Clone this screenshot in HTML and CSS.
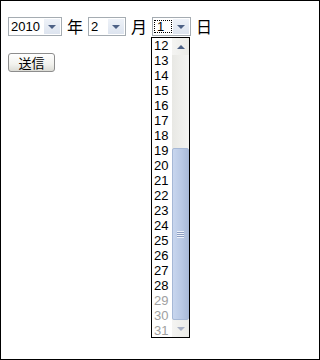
FILE: index.html
```html
<!DOCTYPE html>
<html lang="ja">
<head>
<meta charset="utf-8">
<link rel="stylesheet" href="styles.css">
</head>
<body>
<div class="frame">
  <form class="form">
    <div class="row">
      <span class="sel sel-year"><span class="val">2010</span><span class="drop"><i class="tri"></i></span></span>
      <span class="lbl">年</span>
      <span class="sel sel-month"><span class="val">2</span><span class="drop"><i class="tri"></i></span></span>
      <span class="lbl">月</span>
      <span class="sel sel-day"><span class="val focus">1</span><span class="drop"><i class="tri"></i></span></span>
      <span class="lbl">日</span>
    </div>
    <div class="row2">
      <button type="button" class="submit">送信</button>
    </div>
  </form>
  <div class="list">
    <ul class="opts">
      <li>12</li><li>13</li><li>14</li><li>15</li><li>16</li>
      <li>17</li><li>18</li><li>19</li><li>20</li><li>21</li>
      <li>22</li><li>23</li><li>24</li><li>25</li><li>26</li>
      <li>27</li><li>28</li><li class="dis">29</li><li class="dis">30</li><li class="dis">31</li>
    </ul>
    <div class="sb">
      <div class="sb-btn"><i class="up"></i></div>
      <div class="sb-track">
        <div class="sb-gap"></div>
        <div class="sb-thumb"><span class="grip"></span></div>
      </div>
      <div class="sb-btn"><i class="dn"></i></div>
    </div>
  </div>
</div>
</body>
</html>
```

FILE: styles.css
```css
html, body {
  margin: 0;
  padding: 0;
  background: #fff;
}
.frame {
  position: relative;
  width: 320px;
  height: 360px;
  box-sizing: border-box;
  border: 1px solid #000;
  font-family: "Liberation Sans", "Noto Sans CJK JP", sans-serif;
  font-size: 13px;
  color: #000;
}
.form {
  padding: 16px 0 0 7px;
}
.row {
  display: flex;
  align-items: center;
  height: 19px;
}
.sel {
  display: flex;
  align-items: stretch;
  height: 19px;
  box-sizing: border-box;
  border: 1px solid #a5acb2;
  background: #fff;
}
.sel-year { width: 54px; }
.sel-month { width: 38px; }
.sel-day { width: 39px; }
.val {
  flex: 1;
  padding-left: 2px;
  line-height: 17px;
}
.val.focus {
  flex: 0 0 auto;
  box-sizing: border-box;
  width: 18px;
  margin: 2px 0 2px 1px;
  padding-left: 2px;
  line-height: 11px;
  border: 1px dotted #000;
}
.sel-day .val.focus + .drop { margin-left: auto; }
.drop {
  width: 16px;
  display: flex;
  align-items: center;
  justify-content: center;
  background: linear-gradient(#eef2f8, #dde4ef);
  margin: 1px;
}
.tri {
  width: 0;
  height: 0;
  border-left: 4px solid transparent;
  border-right: 4px solid transparent;
  border-top: 4px solid #4d6185;
}
.lbl {
  font-family: "Noto Sans CJK JP", sans-serif;
  font-size: 16px;
  margin: 0 5px 0 5px;
  line-height: 19px;
}
.row2 {
  margin-top: 17px;
}
.submit {
  width: 47px;
  height: 19px;
  padding: 0;
  border: 1px solid #8d8d8d;
  border-radius: 3px;
  background: linear-gradient(#ffffff, #f2f2ee 60%, #dcdcd6);
  font-family: "Noto Sans CJK JP", sans-serif;
  font-size: 13px;
  line-height: 17px;
  color: #000;
}
.list {
  position: absolute;
  left: 150px;
  top: 36px;
  width: 39px;
  height: 301px;
  box-sizing: border-box;
  border: 1px solid #000;
  background: #fff;
  display: flex;
}
.opts {
  list-style: none;
  margin: 0;
  padding: 0;
  flex: 1;
}
.opts li {
  height: 15px;
  line-height: 15px;
  padding-left: 2px;
  font-size: 13px;
}
.opts li.dis { color: #a0a0a0; }
.sb {
  width: 17px;
  display: flex;
  flex-direction: column;
  background: #f3f3f1;
}
.sb-btn {
  height: 17px;
  display: flex;
  align-items: center;
  justify-content: center;
  background: linear-gradient(90deg, #f4f4f2, #ebebe7);
}
.up, .dn {
  width: 0;
  height: 0;
  border-left: 4px solid transparent;
  border-right: 4px solid transparent;
}
.up { border-bottom: 4px solid #4d6185; }
.dn { border-top: 4px solid #a8b0c4; }
.sb-track {
  flex: 1;
  display: flex;
  flex-direction: column;
  background: linear-gradient(90deg, #e8e8e4, #f4f4f2);
}
.sb-gap { height: 93px; }
.sb-thumb {
  flex: 1;
  box-sizing: border-box;
  border: 1px solid #a6b8d6;
  border-radius: 2px;
  background: linear-gradient(90deg, #c8d6ee, #b8c8e4 60%, #aabbd9);
  display: flex;
  align-items: center;
  justify-content: center;
}
.grip {
  width: 7px;
  height: 7px;
  background: repeating-linear-gradient(#eef2fa 0 1px, #8b9dc1 1px 2px);
}
```
